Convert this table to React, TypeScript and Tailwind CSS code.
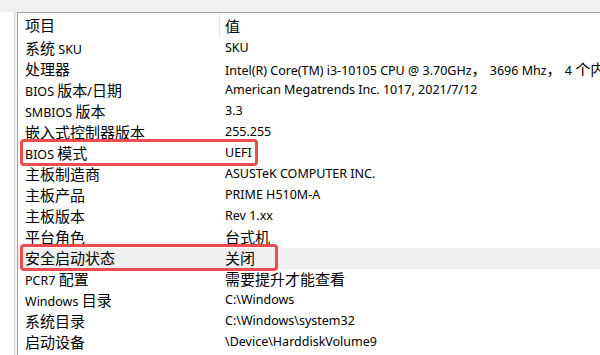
import { Fragment } from "react";

type Row = {
  item: string;
  value: string;
  selected?: boolean;
  marked?: "short" | "long";
};

const ROWS: Row[] = [
  { item: "系统 SKU", value: "SKU" },
  {
    item: "处理器",
    value: "Intel(R) Core(TM) i3-10105 CPU @ 3.70GHz， 3696 Mhz， 4 个内核， 8 个逻辑处理器",
  },
  { item: "BIOS 版本/日期", value: "American Megatrends Inc. 1017, 2021/7/12" },
  { item: "SMBIOS 版本", value: "3.3" },
  { item: "嵌入式控制器版本", value: "255.255" },
  { item: "BIOS 模式", value: "UEFI", marked: "short" },
  { item: "主板制造商", value: "ASUSTeK COMPUTER INC." },
  { item: "主板产品", value: "PRIME H510M-A" },
  { item: "主板版本", value: "Rev 1.xx" },
  { item: "平台角色", value: "台式机" },
  { item: "安全启动状态", value: "关闭", selected: true, marked: "long" },
  { item: "PCR7 配置", value: "需要提升才能查看" },
  { item: "Windows 目录", value: "C:\\Windows" },
  { item: "系统目录", value: "C:\\Windows\\system32" },
  { item: "启动设备", value: "\\Device\\HarddiskVolume9" },
];

const CJK = /([\u3000-\u303f\u3400-\u9fff\uff00-\uffef]+)/;

// Latin runs render at 12.5px, CJK runs at 15px like the Windows fallback font
function MixedText({ text }: { text: string }) {
  const parts = text.split(CJK).filter((p) => p.length > 0);
  return (
    <>
      {parts.map((part, i) =>
        CJK.test(part) ? (
          <span
            key={i}
            className="text-[15px] font-['Noto_Sans_CJK_SC',sans-serif]"
          >
            {part}
          </span>
        ) : (
          <Fragment key={i}>{part}</Fragment>
        ),
      )}
    </>
  );
}

export default function App() {
  return (
    <div className="flex h-[355px] w-[600px] flex-col overflow-hidden bg-[#f0f0f0] font-['Noto_Sans','Noto_Sans_CJK_SC',sans-serif] text-[12.5px] text-black">
      <div className="h-[12px] shrink-0 bg-[#f0f0f0]" />
      <div className="flex min-h-0 flex-1">
        <div className="w-[15px] shrink-0 border-r border-[#d4d4d4] bg-white" />
        <div className="w-[2px] shrink-0 bg-[#f4f4f4]" />
        <div className="flex min-w-0 flex-1 flex-col overflow-hidden border-l border-t border-[#a0a0a0] bg-white">
          <div className="flex h-[25px] shrink-0 items-center">
            <div className="w-[201px] shrink-0 pl-[7px] leading-none">
              <MixedText text="项目" />
            </div>
            <div className="flex h-full items-center border-l border-[#e5e5e5] pl-[5px] leading-none">
              <MixedText text="值" />
            </div>
          </div>
          {ROWS.map((row) => (
            <div
              key={row.item}
              className={`relative flex h-[21px] shrink-0 items-center whitespace-nowrap ${
                row.selected ? "bg-[#efefef]" : ""
              }`}
            >
              <div className="w-[202px] shrink-0 pl-[7px] leading-none">
                <MixedText text={row.item} />
              </div>
              <div className="pl-[5px] leading-none">
                <MixedText text={row.value} />
              </div>
              {row.marked ? (
                <div
                  className={`pointer-events-none absolute top-[-4px] bottom-[-2px] left-[2px] rounded-[4px] border-[3px] border-[#ec4b50] ${
                    row.marked === "short" ? "w-[238px]" : "w-[258px]"
                  }`}
                />
              ) : null}
            </div>
          ))}
        </div>
      </div>
    </div>
  );
}
